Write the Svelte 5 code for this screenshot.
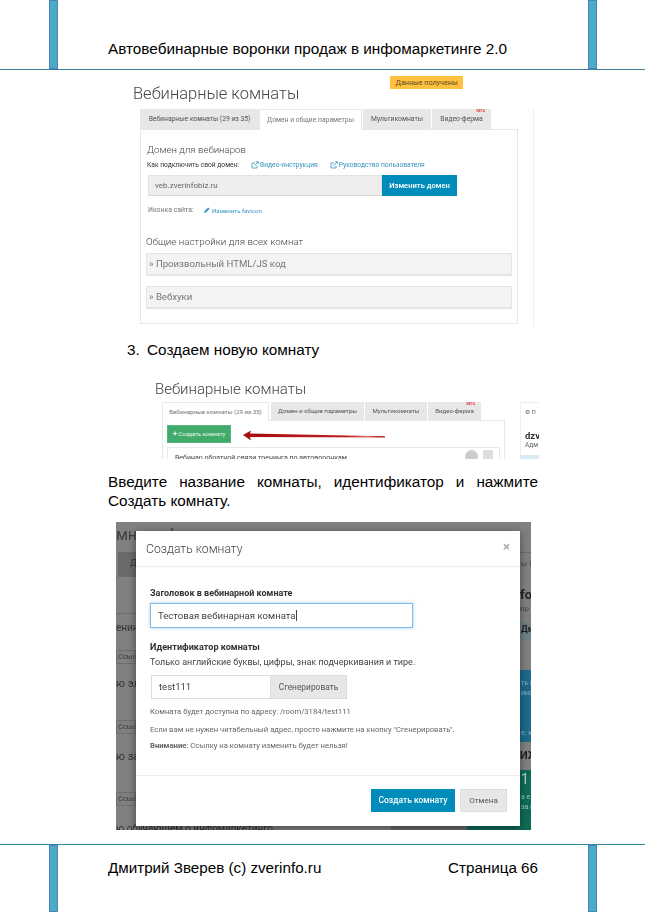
<script>
  const tabs1 = [
    { label: 'Вебинарные комнаты (29 из 35)', w: 119, active: false },
    { label: 'Домен и общие параметры', w: 103, active: true },
    { label: 'Мультикомнаты', w: 68, active: false },
    { label: 'Видео-ферма', w: 59, active: false, beta: true }
  ];
  const tabs2 = [
    { label: 'Вебинарные комнаты (29 из 35)', w: 107, active: true },
    { label: 'Домен и общие параметры', w: 93, active: false },
    { label: 'Мультикомнаты', w: 62, active: false },
    { label: 'Видео-ферма', w: 53, active: false, beta: true }
  ];
</script>

<div class="page">
  <div class="bar left top"></div>
  <div class="bar right top"></div>
  <div class="bar left bottom"></div>
  <div class="bar right bottom"></div>

  <header class="head">Автовебинарные воронки продаж в инфомаркетинге 2.0</header>

  <section class="shot1">
    <span class="toast">Данные получены</span>
    <h2 class="title1">Вебинарные комнаты</h2>
    <div class="cols1">
      <div class="main1">
        <div class="tabs tabs1">
          {#each tabs1 as t}
            <div class="tab" class:active={t.active} style="width:{t.w}px">
              {t.label}{#if t.beta}<i class="beta">BETA</i>{/if}
            </div>
          {/each}
        </div>
        <div class="panel1">
          <h3 class="h-domain">Домен для вебинаров</h3>
          <div class="howto">
            <span class="howto-label">Как подключить свой домен:</span>
            <span class="link first">
              <svg width="8" height="8" viewBox="0 0 8 8"><path d="M6 4.5V7H1V2h3" fill="none" stroke="#3a94c0" stroke-width=".8"/><path d="M3.5 4.5 7 1M5 .7h2.3V3" fill="none" stroke="#3a94c0" stroke-width=".8"/></svg>
              Видео-инструкция
            </span>
            <span class="link second">
              <svg width="8" height="8" viewBox="0 0 8 8"><path d="M6 4.5V7H1V2h3" fill="none" stroke="#3a94c0" stroke-width=".8"/><path d="M3.5 4.5 7 1M5 .7h2.3V3" fill="none" stroke="#3a94c0" stroke-width=".8"/></svg>
              Руководство пользователя
            </span>
          </div>
          <div class="domain-row">
            <div class="domain">veb.zverinfobiz.ru</div>
            <div class="domain-btn">Изменить домен</div>
          </div>
          <div class="fav">
            <span class="fav-label">Иконка сайта:</span>
            <span class="fav-link">
              <svg width="6" height="6" viewBox="0 0 6 6"><path d="M0 6l.6-2L4.2.4l1.4 1.4L2 5.4z" fill="#3a94c0"/></svg>
              Изменить favicon
            </span>
          </div>
          <h3 class="h-common">Общие настройки для всех комнат</h3>
          <div class="acc">» Произвольный HTML/JS код</div>
          <div class="acc">» Вебхуки</div>
        </div>
      </div>
      <div class="side1"></div>
    </div>
  </section>

  <div class="step"><span class="num">3.</span><span>Создаем новую комнату</span></div>

  <section class="shot2">
    <h2 class="title2">Вебинарные комнаты</h2>
    <div class="cols2">
      <div class="main2">
        <div class="tabs tabs2">
          {#each tabs2 as t}
            <div class="tab" class:active={t.active} style="width:{t.w}px">
              {t.label}{#if t.beta}<i class="beta">BETA</i>{/if}
            </div>
          {/each}
        </div>
        <div class="panel2">
          <div class="green"><b>+</b> Создать комнату</div>
          <svg class="arrow" width="142" height="12" viewBox="0 0 142 12">
            <defs>
              <linearGradient id="ar" x1="0" x2="1" y1="0" y2="0">
                <stop offset="0" stop-color="#a80c0c"/>
                <stop offset=".72" stop-color="#c02020"/>
                <stop offset=".88" stop-color="#d86a6a"/>
                <stop offset=".96" stop-color="#b81010"/>
              </linearGradient>
            </defs>
            <path d="M0 5 8 .5 7 3.6 142 6.2V7.6L7 7 8 10.5z" fill="url(#ar)"/>
          </svg>
          <div class="room">
            <span>Вебинар обратной связи тренинга по автоворонкам</span>
            <i class="round"></i><i class="sq"></i>
          </div>
        </div>
      </div>
      <div class="side2">
        <div class="side2-top">⚙ П</div>
        <b class="dzv">dzv</b>
        <span class="adm">Адм</span>
        <div class="strip"></div>
      </div>
    </div>
  </section>

  <p class="para">Введите название комнаты, идентификатор и нажмите Создать комнату.</p>

  <section class="shot3">
    <div class="bg">
      <span class="b-t" style="left:0;top:4px;font-size:16px;color:#3f3f3f">мнаты !</span>
      <div class="b-r" style="left:2px;top:30px;width:20px;height:25px;background:#6b6b6b"></div>
      <span class="b-t" style="left:14px;top:37px;font-size:9px">Д</span>
      <div class="b-r" style="left:0;top:91px;width:20px;height:1px;background:#6e6e6e"></div>
      <span class="b-t" style="left:0;top:100px;font-size:10px">енинг</span>
      <span class="b-b" style="left:0;top:128px">Ссыл</span>
      <span class="b-t" style="left:0;top:156px;font-size:11px">ю эл</span>
      <span class="b-b" style="left:0;top:198px">Ссыл</span>
      <span class="b-t" style="left:0;top:229px;font-size:11px">ю за</span>
      <span class="b-b" style="left:0;top:270px">Ссыл</span>
      <span class="b-t" style="left:0;top:301px;font-size:10px;white-space:nowrap">ю обучающем о инфомаркетинго</span>

      <div class="b-r" style="left:404px;top:30px;width:11px;height:1px;background:#6e6e6e"></div>
      <span class="b-t" style="left:405px;top:38px;font-size:8px;color:#4a4a4a">ы Е</span>
      <span class="b-t" style="left:404px;top:66px;font-size:13px;font-weight:700;color:#222">fo</span>
      <span class="b-t" style="left:404px;top:83px;font-size:8px;color:#444">ор</span>
      <div class="b-r" style="left:404px;top:100px;width:11px;height:18px;background:#6f8088"></div>
      <span class="b-t" style="left:405px;top:103px;font-size:9px;font-weight:700;color:#222">Дм</span>
      <div class="b-r" style="left:404px;top:148px;width:11px;height:72px;background:#1d6a8c"></div>
      <span class="b-t" style="left:405px;top:158px;font-size:7px;color:#8ab4c6">ть в</span>
      <span class="b-t" style="left:405px;top:168px;font-size:7px;color:#8ab4c6">ина</span>
      <span class="b-t" style="left:405px;top:208px;font-size:7px;color:#8ab4c6">е: к</span>
      <span class="b-t" style="left:404px;top:228px;font-size:11px;font-weight:700;color:#222">ИЖ</span>
      <div class="b-r" style="left:404px;top:248px;width:11px;height:60px;background:#0f6b57"></div>
      <span class="b-t" style="left:405px;top:250px;font-size:14px;color:#b9d5cc">1</span>
      <span class="b-t" style="left:405px;top:272px;font-size:7px;color:#9cc4b8">а е</span>
      <span class="b-t" style="left:405px;top:282px;font-size:7px;color:#9cc4b8">за в</span>
      <div class="b-r" style="left:275px;top:304px;width:76px;height:4px;background:#6a6a6a"></div>
      <div class="b-r" style="left:351px;top:304px;width:64px;height:4px;background:#0f6b57"></div>
    </div>

    <div class="modal">
      <div class="m-head">
        <span class="m-title">Создать комнату</span>
        <span class="m-close">×</span>
      </div>
      <div class="m-body">
        <label class="lbl l1">Заголовок в вебинарной комнате</label>
        <div class="focus">Тестовая вебинарная комната<i class="caret"></i></div>
        <label class="lbl l2">Идентификатор комнаты</label>
        <div class="hint">Только английские буквы, цифры, знак подчеркивания и тире.</div>
        <div class="id-row">
          <div class="id">test111</div>
          <div class="gen">Сгенерировать</div>
        </div>
        <div class="note n1">Комната будет доступна по адресу: /room/3184/test111</div>
        <div class="note n2">Если вам не нужен читабельный адрес, просто нажмите на кнопку "Сгенерировать".</div>
        <div class="note n3"><b>Внимание</b>: Ссылку на комнату изменить будет нельзя!</div>
      </div>
      <div class="m-foot">
        <div class="btn-create">Создать комнату</div>
        <div class="btn-cancel">Отмена</div>
      </div>
    </div>
  </section>

  <footer class="foot">
    <span>Дмитрий Зверев (с) zverinfo.ru</span>
    <span>Страница 66</span>
  </footer>
</div>

<style>
  :global(body) { margin: 0; background: #fff; }
  .page {
    position: relative;
    width: 645px;
    height: 912px;
    overflow: hidden;
    background: #fff;
    font-family: "Liberation Sans", Arial, sans-serif;
    color: #000;
  }
  .bar {
    position: absolute;
    width: 9px;
    box-sizing: border-box;
    background: #4bacc6;
    border: 1px solid #4f81bd;
  }
  .bar.left { left: 49px; }
  .bar.right { left: 588px; }
  .bar.top { top: 0; height: 69px; }
  .bar.bottom { top: 845px; height: 67px; }

  .head {
    box-sizing: border-box;
    height: 70px;
    padding: 39px 0 0 108px;
    font-size: 15.3px;
    line-height: 20px;
    border-bottom: 1px solid #3d7f96;
  }

  .shot1 {
    position: relative;
    height: 258px;
    padding-left: 133px;
    font-family: Roboto, sans-serif;
    filter: blur(.3px);
  }
  .toast {
    position: absolute;
    left: 390px;
    top: 6px;
    width: 73px;
    height: 13px;
    background: #ffc13f;
    color: #5a4a20;
    font-size: 7.2px;
    line-height: 13px;
    text-align: center;
  }
  .title1 {
    margin: 0;
    padding-top: 13px;
    height: 26px;
    font-weight: 300;
    font-size: 16.5px;
    line-height: 22px;
    color: #444;
  }
  .cols1 { display: flex; margin-left: 7px; }
  .main1 { width: 378px; }
  .side1 { width: 1px; height: 218px; margin-left: 15px; background: #eee; }

  .tabs { display: flex; }
  .tab {
    position: relative;
    box-sizing: border-box;
    background: #e7e7e7;
    color: #555;
    text-align: center;
    white-space: nowrap;
    margin-right: 1px;
  }
  .tab.active { background: #fff; color: #777; }
  .tabs1 .tab { height: 20px; font-size: 6.75px; line-height: 20px; }
  .tabs1 .tab:first-child { margin-right: 0; }
  .tabs1 .tab.active { width: 103px; border: 1px solid #e8e8e8; border-bottom: 0; height: 21px; margin-bottom: -1px; z-index: 1; margin-right: 1px; }
  .tabs2 .tab { height: 18px; font-size: 6.15px; line-height: 18px; }
  .tabs2 .tab.active { border: 1px solid #e8e8e8; border-bottom: 0; height: 19px; margin-bottom: -1px; z-index: 1; margin-right: 2px; color: #777; }
  .beta {
    position: absolute;
    right: 6px;
    top: 0;
    font-style: normal;
    font-size: 3.5px;
    line-height: 5px;
    color: #e0474c;
    font-weight: 700;
  }

  .panel1 {
    box-sizing: border-box;
    height: 195px;
    border: 1px solid #e6e6e6;
    padding: 13px 5px 0 5px;
    background: #fff;
  }
  .h-domain, .h-common {
    margin: 0;
    font-weight: 300;
    color: #444;
    white-space: nowrap;
  }
  .h-domain { padding-left: 1px; font-size: 9.7px; line-height: 14px; }
  .howto {
    display: flex;
    align-items: center;
    height: 10px;
    margin-top: 3px;
    padding-left: 1px;
    font-size: 6.7px;
    white-space: nowrap;
  }
  .howto-label { width: 104px; color: #333; }
  .link { display: inline-flex; align-items: center; gap: 0; color: #3a94c0; }
  .link svg { margin-right: 1px; }
  .link.second { margin-left: 12px; }
  .domain-row { display: flex; height: 21px; margin-top: 5px; padding-left: 2px; }
  .domain {
    box-sizing: border-box;
    width: 234px;
    background: #eee;
    border: 1px solid #e2e2e2;
    border-bottom-color: #d8d8d8;
    color: #666;
    font-size: 8px;
    line-height: 19px;
    padding-left: 6px;
  }
  .domain-btn {
    width: 75px;
    background: #008cba;
    color: #fff;
    font-size: 7.6px;
    font-weight: 500;
    line-height: 21px;
    text-align: center;
  }
  .fav {
    display: flex;
    align-items: center;
    height: 10px;
    margin-top: 9px;
    padding-left: 2px;
    font-size: 6.9px;
    white-space: nowrap;
  }
  .fav-label { width: 56px; color: #777; }
  .fav-link { display: inline-flex; align-items: center; gap: 2px; color: #3a94c0; font-size: 6.1px; }
  .h-common { margin-top: 20px; font-size: 9.8px; line-height: 14px; }
  .acc {
    box-sizing: border-box;
    width: 366px;
    height: 23px;
    margin-top: 4px;
    background: #f3f3f3;
    border: 1px solid #e4e4e4;
    border-bottom-width: 2px;
    color: #777;
    font-size: 9.6px;
    line-height: 19px;
    padding-left: 2px;
  }
  .acc + .acc { margin-top: 10px; }

  .step {
    display: flex;
    height: 22px;
    margin-top: 11px;
    padding-left: 127px;
    font-size: 15.3px;
    line-height: 22px;
  }
  .num { width: 20px; }

  .shot2 {
    height: 80px;
    margin-top: 18px;
    padding-left: 155px;
    overflow: hidden;
    font-family: Roboto, sans-serif;
    filter: blur(.3px);
  }
  .title2 {
    margin: 0;
    height: 23px;
    font-weight: 300;
    font-size: 15px;
    line-height: 20px;
    color: #444;
  }
  .cols2 { display: flex; margin-left: 7px; }
  .main2 { width: 343px; }
  .panel2 {
    position: relative;
    box-sizing: border-box;
    height: 60px;
    border: 1px solid #e6e6e6;
    padding: 4px 4px 0;
  }
  .green {
    box-sizing: border-box;
    width: 64px;
    height: 18px;
    background: #41ab6b;
    color: #eaf6ee;
    border: 1px solid #5bb780;
    font-size: 5.8px;
    line-height: 16px;
    text-align: center;
    white-space: nowrap;
  }
  .green b { font-size: 8px; }
  .arrow { position: absolute; left: 80px; top: 9px; }
  .room {
    position: relative;
    box-sizing: border-box;
    height: 40px;
    margin-top: 4px;
    border: 1px solid #e8e8e8;
    padding: 5px 0 0 7px;
    font-size: 7px;
    line-height: 10px;
    color: #444;
    white-space: nowrap;
  }
  .round { position: absolute; left: 297px; top: 2px; width: 13px; height: 13px; border-radius: 50%; background: #ccc; }
  .sq { position: absolute; left: 315px; top: 2px; width: 10px; height: 13px; background: #ddd; }
  .side2 {
    box-sizing: border-box;
    width: 19px;
    margin-left: 15px;
    height: 60px;
    overflow: hidden;
    border-left: 1px solid #eee;
    border-top: 1px solid #eee;
    padding-left: 4px;
    white-space: nowrap;
  }
  .side2-top { font-size: 6px; line-height: 18px; color: #666; }
  .dzv { display: block; font-size: 9.5px; line-height: 11px; margin-top: 9px; color: #333; }
  .adm { display: block; font-size: 6.5px; line-height: 8px; color: #666; }
  .strip { height: 10px; margin: 6px 0 0 -4px; background: #d8ebf4; }

  .para {
    box-sizing: border-box;
    width: 430px;
    margin: 13px 0 0 108px;
    height: 39px;
    font-size: 15.3px;
    line-height: 19px;
    text-align: justify;
  }

  .shot3 {
    position: relative;
    box-sizing: border-box;
    width: 415px;
    height: 308px;
    margin: 11px 0 0 116px;
    padding: 9px 0 0 20px;
    background: #808080;
    overflow: hidden;
    font-family: Roboto, sans-serif;
    filter: blur(.25px);
  }
  .bg { position: absolute; inset: 0; }
  .b-t { position: absolute; color: #333; white-space: nowrap; line-height: 1.1; }
  .b-r { position: absolute; }
  .b-b {
    position: absolute;
    box-sizing: border-box;
    height: 14px;
    width: 20px;
    overflow: hidden;
    border: 1px solid #6e6e6e;
    padding-left: 1px;
    color: #3a3a3a;
    font-size: 7.5px;
    line-height: 12px;
  }
  .modal {
    position: relative;
    box-sizing: border-box;
    width: 384px;
    height: 295px;
    background: #fff;
    box-shadow: 0 2px 8px rgba(0, 0, 0, .45);
  }
  .m-head {
    box-sizing: border-box;
    display: flex;
    justify-content: space-between;
    align-items: center;
    height: 36px;
    padding: 0 10px;
    border-bottom: 1px solid #eee;
  }
  .m-title { font-weight: 300; font-size: 12.2px; color: #444; }
  .m-close { font-size: 13px; font-weight: 700; color: #aaa; margin-top: -5px; }
  .m-body { box-sizing: border-box; height: 209px; padding: 20px 14px 0; border-bottom: 1px solid #eee; }
  .lbl { display: block; font-weight: 700; color: #333; font-size: 9px; line-height: 12px; white-space: nowrap; }
  .focus {
    box-sizing: border-box;
    width: 263px;
    height: 25px;
    margin-top: 4px;
    border: 1px solid #84bdea;
    box-shadow: 0 0 3px rgba(102, 175, 233, .6);
    padding-left: 7px;
    font-size: 9.6px;
    line-height: 23px;
    color: #444;
    white-space: nowrap;
  }
  .caret { display: inline-block; width: 1px; height: 11px; background: #444; vertical-align: -2px; }
  .l2 { margin-top: 13px; font-size: 9.1px; }
  .hint { margin-top: 3px; font-size: 9px; line-height: 12px; color: #444; white-space: nowrap; }
  .id-row { display: flex; height: 24px; margin-top: 7px; padding-left: 1px; }
  .id {
    box-sizing: border-box;
    width: 120px;
    border: 1px solid #ddd;
    padding-left: 7px;
    color: #444;
    font-size: 9.5px;
    line-height: 22px;
  }
  .gen {
    box-sizing: border-box;
    width: 76px;
    background: #e7e7e7;
    border: 1px solid #ddd;
    border-left: 0;
    color: #555;
    font-size: 8.4px;
    line-height: 22px;
    text-align: center;
  }
  .note { font-size: 7.7px; line-height: 11px; color: #666; white-space: nowrap; }
  .n1 { margin-top: 7px; }
  .n2 { margin-top: 7px; }
  .n3 { margin-top: 5px; }
  .n3 b { font-weight: 700; color: #666; }
  .m-foot { display: flex; justify-content: flex-end; gap: 5px; padding: 13px 13px 0 0; }
  .btn-create, .btn-cancel { box-sizing: border-box; height: 23px; line-height: 23px; text-align: center; font-size: 8px; }
  .btn-create { width: 84px; background: #008cba; color: #fff; font-weight: 500; font-size: 8.5px; }
  .btn-cancel { width: 47px; background: #e7e7e7; border: 1px solid #ddd; line-height: 21px; color: #555; }

  .foot {
    box-sizing: border-box;
    display: flex;
    justify-content: space-between;
    width: 645px;
    height: 68px;
    margin-top: 14px;
    padding: 13px 107px 0 108px;
    border-top: 1px solid #31859c;
    font-size: 15.2px;
    line-height: 20px;
  }
</style>
